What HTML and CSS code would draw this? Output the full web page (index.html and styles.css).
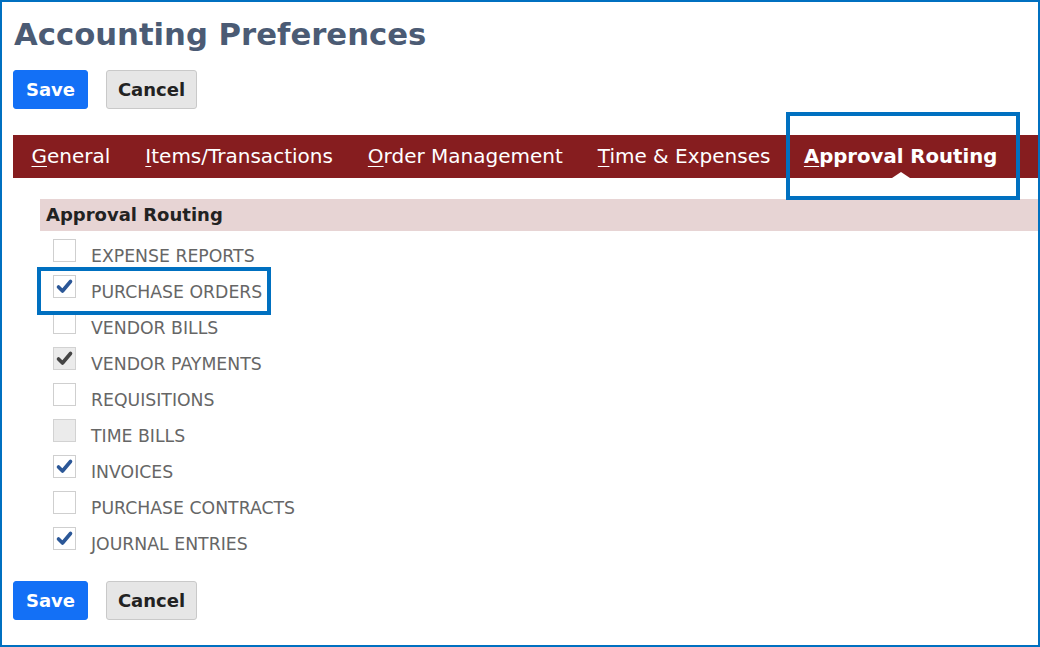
FILE: index.html
```html
<!DOCTYPE html>
<html>
<head>
<meta charset="utf-8">
<link rel="stylesheet" href="styles.css">
</head>
<body>
<div class="frame">
  <h1 class="title">Accounting Preferences</h1>
  <div class="actions">
    <button class="btn btn-save">Save</button>
    <button class="btn btn-cancel">Cancel</button>
  </div>
  <nav class="tabs">
    <span class="tab"><u>G</u>eneral</span>
    <span class="tab"><u>I</u>tems/Transactions</span>
    <span class="tab"><u>O</u>rder Management</span>
    <span class="tab"><u>T</u>ime &amp; Expenses</span>
    <span class="tab active"><u>A</u>pproval Routing</span>
  </nav>
  <div class="section">
    <div class="section-head">Approval Routing</div>
    <div class="rows">
      <div class="row"><span class="cb"></span><span class="lbl">EXPENSE REPORTS</span></div>
      <div class="row"><span class="cb"><svg viewBox="0 0 23 23"><path d="M5.5 12 L9.5 16 L17.5 6.5"/></svg></span><span class="lbl">PURCHASE ORDERS</span></div>
      <div class="row"><span class="cb"></span><span class="lbl">VENDOR BILLS</span></div>
      <div class="row"><span class="cb dis"><svg viewBox="0 0 23 23"><path d="M5.5 12 L9.5 16 L17.5 6.5"/></svg></span><span class="lbl">VENDOR PAYMENTS</span></div>
      <div class="row"><span class="cb"></span><span class="lbl">REQUISITIONS</span></div>
      <div class="row"><span class="cb dis"></span><span class="lbl">TIME BILLS</span></div>
      <div class="row"><span class="cb"><svg viewBox="0 0 23 23"><path d="M5.5 12 L9.5 16 L17.5 6.5"/></svg></span><span class="lbl">INVOICES</span></div>
      <div class="row"><span class="cb"></span><span class="lbl">PURCHASE CONTRACTS</span></div>
      <div class="row"><span class="cb"><svg viewBox="0 0 23 23"><path d="M5.5 12 L9.5 16 L17.5 6.5"/></svg></span><span class="lbl">JOURNAL ENTRIES</span></div>
    </div>
  </div>
  <div class="actions bottom">
    <button class="btn btn-save">Save</button>
    <button class="btn btn-cancel">Cancel</button>
  </div>
  <div class="hl hl-tab"></div>
  <div class="hl hl-row"></div>
</div>
</body>
</html>
```
FILE: styles.css
```css
html, body {
  margin: 0;
  padding: 0;
  background: #fff;
}
.frame {
  position: relative;
  width: 1040px;
  height: 647px;
  box-sizing: border-box;
  border: 2px solid #0070c0;
  padding: 15px 0 0 11px;
  font-family: "DejaVu Sans", Verdana, sans-serif;
  overflow: hidden;
}
.title {
  margin: 0;
  font-size: 30.7px;
  line-height: 36px;
  font-weight: bold;
  color: #4b5b74;
  padding-left: 1px;
}
.actions {
  display: flex;
  gap: 18px;
  margin-top: 17px;
}
.actions.bottom {
  margin-top: 18px;
}
.btn {
  font-family: "DejaVu Sans", Verdana, sans-serif;
  font-size: 18px;
  font-weight: bold;
  height: 39px;
  padding: 0;
  border-radius: 3px;
  box-sizing: border-box;
  cursor: pointer;
}
.btn-save {
  width: 75px;
  background: #1370f6;
  border: 1px solid #1370f6;
  color: #fff;
}
.btn-cancel {
  width: 91px;
  background: #e6e6e6;
  border: 1px solid #c9c9c9;
  color: #222;
}
.tabs {
  display: flex;
  height: 43px;
  margin-top: 26px;
  background: #861d1f;
  padding-left: 1px;
  align-items: center;
}
.tab {
  position: relative;
  color: #fff;
  font-size: 20px;
  padding: 0 17.5px;
  line-height: 43px;
  white-space: nowrap;
}
.tab u {
  text-decoration-thickness: 1px;
  text-underline-offset: 3px;
}
.tab.active {
  font-weight: bold;
  font-size: 19.7px;
  padding-left: 16px;
}
.tab.active::after {
  content: "";
  position: absolute;
  left: 50%;
  bottom: 0;
  margin-left: -9px;
  border-left: 9px solid transparent;
  border-right: 9px solid transparent;
  border-bottom: 6px solid #fff;
}
.section {
  margin-top: 21px;
  margin-left: 27px;
}
.section-head {
  height: 32px;
  line-height: 32px;
  background: #e7d4d4;
  color: #222;
  font-weight: bold;
  font-size: 18px;
  padding-left: 6px;
}
.rows {
  padding-top: 8px;
  padding-left: 13px;
}
.row {
  height: 36px;
  font-size: 17.3px;
  line-height: 17px;
  white-space: nowrap;
}
.cb {
  display: inline-block;
  position: relative;
  width: 23px;
  height: 23px;
  box-sizing: border-box;
  border: 1px solid #cfcfcf;
  background: #fff;
  margin-right: 15px;
  vertical-align: baseline;
}
.cb svg {
  position: absolute;
  left: -1px;
  top: -1px;
  width: 23px;
  height: 23px;
}
.cb svg path {
  fill: none;
  stroke: #2b5797;
  stroke-width: 3.6;
  stroke-linecap: round;
  stroke-linejoin: round;
}
.cb.dis {
  background: #ebebeb;
  border-color: #d2d2d2;
}
.cb.dis svg path {
  stroke: #444;
}
.lbl {
  color: #666;
}
.hl {
  position: absolute;
  border: 4px solid #0070c0;
  box-sizing: border-box;
  pointer-events: none;
}
.hl-tab {
  left: 784px;
  top: 110px;
  width: 234px;
  height: 88px;
}
.hl-row {
  left: 35px;
  top: 265px;
  width: 234px;
  height: 48px;
}
```
